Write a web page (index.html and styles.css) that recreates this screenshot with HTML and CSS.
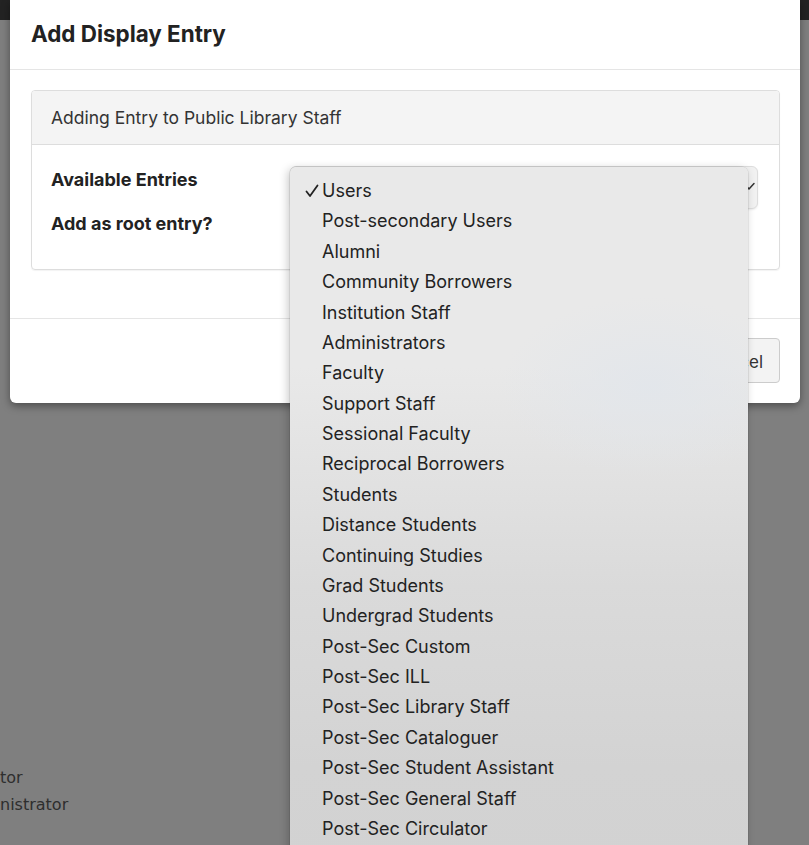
FILE: index.html
```html
<!DOCTYPE html>
<html>
<head>
<meta charset="utf-8">
<link rel="stylesheet" href="styles.css">
</head>
<body>
<div class="navbar"></div>
<div class="page">
  <div class="bg-list">
    <div>tor</div>
    <div>nistrator</div>
  </div>
</div>

<div class="modal">
  <div class="modal-header">
    <h4 class="modal-title">Add Display Entry</h4>
  </div>
  <div class="modal-body">
    <div class="panel">
      <div class="panel-heading">Adding Entry to Public Library Staff</div>
      <div class="panel-body">
        <div class="form-row first">
          <label class="form-label">Available Entries</label>
          <div class="select">
            <svg class="chev" width="14" height="10" viewBox="0 0 14 10"><path d="M2 2.5 L7 8 L12 2.5" fill="none" stroke="#333" stroke-width="1.5" stroke-linecap="round" stroke-linejoin="round"/></svg>
          </div>
        </div>
        <div class="form-row second">
          <label class="form-label">Add as root entry?</label>
        </div>
      </div>
    </div>
  </div>
  <div class="modal-footer">
    <button class="btn">Cancel</button>
  </div>
</div>

<ul class="menu">
  <li class="checked"><svg class="check" width="14" height="14" viewBox="0 0 14 14"><path d="M1.5 7.5 L5 12 L12.5 1.5" fill="none" stroke="#222" stroke-width="1.8" stroke-linecap="round" stroke-linejoin="round"/></svg>Users</li>
  <li>Post-secondary Users</li>
  <li>Alumni</li>
  <li>Community Borrowers</li>
  <li>Institution Staff</li>
  <li>Administrators</li>
  <li>Faculty</li>
  <li>Support Staff</li>
  <li>Sessional Faculty</li>
  <li>Reciprocal Borrowers</li>
  <li>Students</li>
  <li>Distance Students</li>
  <li>Continuing Studies</li>
  <li>Grad Students</li>
  <li>Undergrad Students</li>
  <li>Post-Sec Custom</li>
  <li>Post-Sec ILL</li>
  <li>Post-Sec Library Staff</li>
  <li>Post-Sec Cataloguer</li>
  <li>Post-Sec Student Assistant</li>
  <li>Post-Sec General Staff</li>
  <li>Post-Sec Circulator</li>
</ul>
</body>
</html>
```

FILE: styles.css
```css
html, body {
  margin: 0;
  padding: 0;
  height: 100%;
  overflow: hidden;
}
body {
  background: #7f7f7f;
  font-family: Inter, "Liberation Sans", Arial, sans-serif;
  color: #333;
}
.navbar {
  height: 20px;
  background: #232323;
}
.page {
  padding-top: 744px;
}
.bg-list {
  font-family: "DejaVu Sans", sans-serif;
  font-size: 16px;
  line-height: 27px;
  color: #2e2e2e;
}
.modal {
  position: absolute;
  left: 10px;
  top: 0;
  width: 790px;
  background: #fff;
  border-radius: 0 0 6px 6px;
  box-shadow: 0 3px 9px rgba(0,0,0,0.4);
}
.modal-header {
  height: 70px;
  border-bottom: 1px solid #e5e5e5;
  display: flex;
  align-items: center;
  padding: 0 21px;
  box-sizing: border-box;
}
.modal-title {
  margin: 0;
  font-size: 22.4px;
  font-weight: 700;
  color: #222;
  padding-bottom: 2px;
}
.modal-body {
  padding: 20px 20px 48px 21px;
}
.panel {
  border: 1px solid #ddd;
  border-radius: 4px;
  box-shadow: 0 1px 1px rgba(0,0,0,0.05);
}
.panel-heading {
  height: 53px;
  background: #f4f4f4;
  border-bottom: 1px solid #ddd;
  border-radius: 3px 3px 0 0;
  display: flex;
  align-items: center;
  padding: 0 20px 0 19px;
  font-size: 17.5px;
  color: #333;
}
.panel-body {
  padding: 21px 20px 0 19px;
  height: 103px;
}
.form-row {
  display: flex;
}
.form-row.first {
  height: 43px;
}
.form-row.second {
  margin-top: 1px;
}
.form-label {
  width: 239px;
  font-weight: 700;
  font-size: 18px;
  line-height: 20px;
  padding-top: 4px;
  color: #222;
}
.select {
  width: 468px;
  height: 43px;
  box-sizing: border-box;
  border: 1px solid #ddd;
  border-radius: 6px;
  background: #f1f1f1;
  position: relative;
  box-shadow: 0 1px 2px rgba(0,0,0,0.08);
}
.chev {
  position: absolute;
  left: 451px;
  top: 14px;
}
.modal-footer {
  border-top: 1px solid #e5e5e5;
  padding: 19px 20px 20px;
  display: flex;
  justify-content: flex-end;
}
.btn {
  height: 45px;
  padding: 0 16px;
  padding-top: 2px;
  font-family: Inter, "Liberation Sans", Arial, sans-serif;
  font-size: 17px;
  color: #333;
  background: #f3f3f3;
  border: 1px solid #ccc;
  border-radius: 4px;
}
.menu {
  position: absolute;
  left: 290px;
  top: 167px;
  width: 458px;
  margin: 0;
  padding: 9px 0 0;
  list-style: none;
  border-radius: 6px 6px 0 0;
  background:
    radial-gradient(ellipse 150px 90px at 360px 220px, rgba(226,230,235,0.9), rgba(226,230,235,0)),
    linear-gradient(#e9e9e9 0px, #e9e9e9 200px, #dadada 420px, #d3d3d3 600px, #d2d2d2 700px);
  box-shadow: -2px 2px 10px rgba(0,0,0,0.22), 0 0 0 0.5px rgba(0,0,0,0.12);
  font-family: Inter, "Liberation Sans", Arial, sans-serif;
  font-size: 18px;
  color: #222;
  height: 680px;
}
.menu li {
  height: 30.38px;
  line-height: 30.38px;
  padding-left: 32px;
  position: relative;
  white-space: nowrap;
}
.check {
  position: absolute;
  left: 15px;
  top: 8px;
}
```
